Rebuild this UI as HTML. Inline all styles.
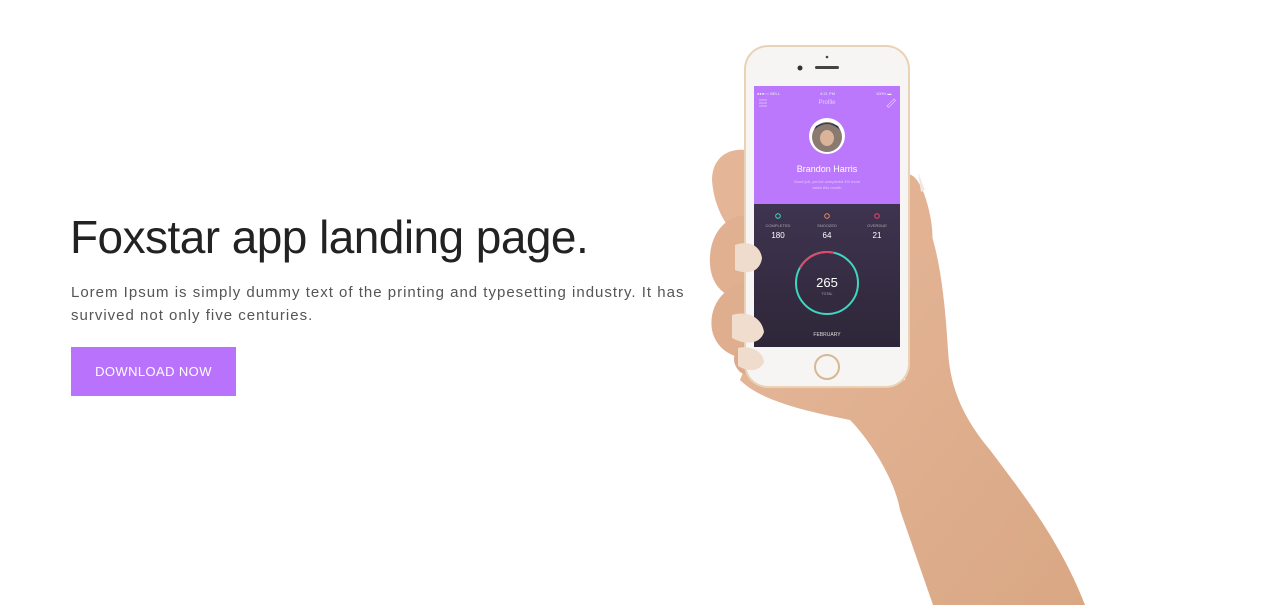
<!DOCTYPE html>
<html><head><meta charset="utf-8"><style>
*{margin:0;padding:0;box-sizing:border-box}
body{width:1267px;height:605px;background:#fff;position:relative;overflow:hidden;font-family:"Liberation Sans",sans-serif}
h1{position:absolute;left:70px;top:210px;font-size:46px;font-weight:400;color:#222;letter-spacing:-0.55px;white-space:nowrap}
p{position:absolute;left:71px;top:281px;width:660px;font-size:15px;line-height:23px;color:#555;letter-spacing:1.0px}
.btn{position:absolute;left:71px;top:347px;width:165px;height:49px;background:#b872fb;color:#fff;font-size:13px;letter-spacing:0.4px;text-align:center;line-height:49px}
svg{position:absolute;left:0;top:0}
</style></head><body>
<h1>Foxstar app landing page.</h1>
<p>Lorem Ipsum is simply dummy text of the printing and typesetting industry. It has survived not only five centuries.</p>
<div class="btn">DOWNLOAD NOW</div>
<svg width="1267" height="605" viewBox="0 0 1267 605">
<defs>
<linearGradient id="sk" x1="0" y1="0" x2="1" y2="1"><stop offset="0" stop-color="#e6b89c"/><stop offset="1" stop-color="#d9a783"/></linearGradient>
<linearGradient id="dk" x1="0" y1="0" x2="0" y2="1"><stop offset="0" stop-color="#3f3450"/><stop offset="1" stop-color="#2e2638"/></linearGradient>
</defs>
<path d="M760 330 L740 380 C760 400 800 410 850 420 C870 440 895 480 900 510 L933 605 L1085 605 C1060 540 1020 490 990 450 C965 420 950 390 948 350 C945 300 940 260 930 230 L912 180 L905 380 L770 385 Z" fill="url(#sk)"/>
<path d="M905 175 C915 170 925 190 930 215 C935 240 932 260 925 262 L908 250 Z" fill="#e2b293"/>
<path d="M745 150 C728 148 712 158 712 180 C714 210 730 235 745 240 Z" fill="#e4b597"/>
<path d="M748 215 C725 215 708 235 710 265 C712 290 730 300 748 300 Z" fill="#e1b091"/>
<path d="M750 280 C725 285 708 305 712 330 C716 350 735 360 752 358 Z" fill="#dfae8f"/>
<path d="M752 340 C735 345 728 360 740 372 C750 378 760 375 765 370 Z" fill="#dcab8c"/>
<rect x="744" y="45" width="166" height="343" rx="24" fill="#e9d2b6"/>
<rect x="746" y="47" width="162" height="339" rx="22" fill="#f6f5f3"/>
<rect x="754" y="86" width="146" height="118" fill="#bb78fc"/>
<rect x="754" y="204" width="146" height="143" fill="url(#dk)"/>
<circle cx="800" cy="68" r="2.5" fill="#333"/><rect x="815" y="66" width="24" height="3" rx="1.5" fill="#444"/><circle cx="827" cy="57" r="1.3" fill="#444"/>
<circle cx="827" cy="367" r="12" fill="none" stroke="#d6b893" stroke-width="2"/>
<text x="757" y="95" font-size="4" fill="#eee">●●●○○ BELL</text><text x="820" y="95" font-size="4" fill="#eee">4:21 PM</text><text x="876" y="95" font-size="4" fill="#eee">100% ▬</text>
<text x="827" y="104" font-size="6" fill="#e5ccff" text-anchor="middle">Profile</text>
<path d="M759 100h8M759 103h8M759 106h8" stroke="#e5ccff" stroke-width="0.7"/>
<path d="M887 106l7-7 1.5 1.5-7 7z" fill="none" stroke="#e5ccff" stroke-width="0.7"/>
<circle cx="827" cy="136" r="18" fill="#fff"/><circle cx="827" cy="137" r="15" fill="#8a7a70"/><path d="M814 130 Q827 118 840 130 L838 126 Q827 120 816 126z" fill="#2b3650"/><ellipse cx="827" cy="138" rx="7" ry="8" fill="#d9b39a"/>
<text x="827" y="172" font-size="9" fill="#fff" text-anchor="middle">Brandon Harris</text>
<text x="827" y="183" font-size="4" fill="#e4c8ff" text-anchor="middle">Good job, you've completed 4% more</text>
<text x="827" y="189" font-size="4" fill="#e4c8ff" text-anchor="middle">tasks this month</text>
<circle cx="778" cy="216" r="2.3" fill="none" stroke="#3fd6c0"/><circle cx="827" cy="216" r="2.3" fill="none" stroke="#e08a5a"/><circle cx="877" cy="216" r="2.3" fill="none" stroke="#e8456a"/>
<g font-size="4" fill="#aaa" text-anchor="middle"><text x="778" y="227">COMPLETED</text><text x="827" y="227">SNOOZED</text><text x="877" y="227">OVERDUE</text></g>
<g font-size="8" fill="#fff" text-anchor="middle"><text x="778" y="238">180</text><text x="827" y="238">64</text><text x="877" y="238">21</text></g>
<circle cx="827" cy="283" r="31" fill="none" stroke="#3fd6c0" stroke-width="2"/>
<path d="M800 268 A31 31 0 0 1 834 252.8" fill="none" stroke="#e8456a" stroke-width="2"/>
<text x="827" y="287" font-size="13" fill="#fff" text-anchor="middle">265</text>
<text x="827" y="295" font-size="3.5" fill="#aaa" text-anchor="middle">TOTAL</text>
<text x="827" y="336" font-size="5" fill="#ddd" text-anchor="middle">FEBRUARY</text>
<path d="M735 245 C748 240 760 245 762 258 C760 272 748 275 735 270 Z" fill="#f0dccc"/>
<path d="M732 315 C748 310 762 318 764 332 C760 345 745 345 732 338 Z" fill="#f1ddce"/>
<path d="M738 348 C752 345 763 352 764 362 C760 372 748 372 738 366 Z" fill="#f0dccc"/>
<path d="M918 172 L925 190 L921 192 Z" fill="#f2e8e2"/>
</svg>
</body></html>
